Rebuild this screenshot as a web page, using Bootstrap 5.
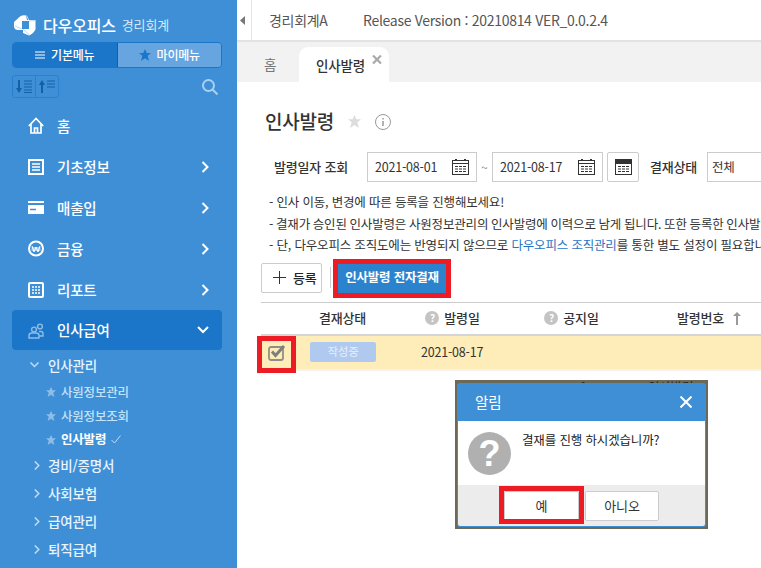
<!DOCTYPE html>
<html lang="ko"><head><meta charset="utf-8"><title>인사발령</title>
<link href="https://cdn.jsdelivr.net/npm/bootstrap@5.3.0/dist/css/bootstrap.min.css" rel="stylesheet">
<style>
html,body{height:568px;overflow:hidden;background:#fff}
body{font-family:"Noto Sans CJK KR","Noto Sans",sans-serif;font-size:13px;color:#333;letter-spacing:-.2px}
.shell{width:761px;height:568px;overflow:hidden;position:relative}
.side{width:237px;height:568px;flex:none;background:#3f8fd7;color:#fff;padding:0 15px 0 12px}
.brand{height:42px;padding:7px 0 0 2px;gap:7px}
.brand b{font-size:16px;font-weight:500;letter-spacing:-.15px}
.brand span{font-size:13px;color:#d5e8f8;margin-left:-1px}
.mswitch{height:26px;border:1px solid #1b76c9;border-radius:4px;overflow:hidden}
.mswitch div{flex:1;font-size:12px;font-weight:500;gap:6px}
.mswitch .on{background:#1b76c9;border-right:1px solid #135fa8}
.mswitch .off{background:#66a5e0}
.sortrow{height:23px;margin-top:7px;padding-right:4px}
.sortb{width:47px;height:23px;border:1px solid #2a80cf;border-radius:3px}
.sortb span{flex:1;height:100%;border-right:1px solid #2a80cf}
.sortb span:last-child{border:0}
.mitem{height:41px;padding-left:16px;padding-right:13px;font-size:14.5px;font-weight:500;border-radius:4px}
.mitem.home{margin-top:7px}
.mitem svg.ic{width:16px;height:17px;margin-right:13px;flex:none}
.mitem.act{background:#1b76c9;height:40px}
.sub1{height:28px;padding-left:19px;font-size:13.5px;font-weight:500;gap:7px;color:#e9f4fd}
.sub1>svg.chv{margin:0 1px 0 3px}
.sub1.first{height:30px;padding-left:18px;gap:9px}
.sub2{height:24px;padding-left:34px;font-size:12.5px;font-weight:500;color:#c3e2f8;gap:5px}
.sub2.sel{color:#fff;font-weight:700;height:23px}
.mn{flex:1;min-width:0;overflow:hidden;position:relative}
.topb{height:42px;border-bottom:2px solid #e3e3e3;font-size:14px;color:#555;letter-spacing:-.3px}
.tog{width:15px;height:40px;border-right:1px solid #e3e3e3;padding-left:3px;flex:none}
.ver1{margin-left:17px;width:94px}
.tabs{height:40px;background:#f2f2f2;padding-top:5px;padding-left:27px;font-size:13.5px}
.tb1{width:35px;color:#777;padding-top:7px}
.tb2{width:90px;height:35px;background:#fff;border-radius:9px 9px 0 0;padding:8px 0 0 17px;position:relative;color:#333;font-weight:500}
.tbx{position:absolute;left:73px;top:8px;display:block}
.pg{padding:0 0 0 28px;width:600px}
.ttl{height:33px;margin-top:23px}
.ttl b{font-size:19px;font-weight:500;color:#333;width:72px;white-space:nowrap;margin-right:11px}
.tstar{margin-right:14px}
.filt{height:30px;margin-top:14px;margin-left:9px;white-space:nowrap}
.flab{font-weight:500;font-size:13px;width:93px;color:#333;flex:none}
.dbox{width:110px;height:30px;border:1px solid #ccc;flex:none;padding:0 7px;font-size:12.5px;justify-content:space-between;color:#333}
.dbox.w2{width:111px}
.dbox.w3{padding-left:4px}
.tilde{width:15px;font-size:11px;text-align:center;color:#6c757d;flex:none}
.cbtn{width:32px;height:30px;border:1px solid #ccc;border-radius:2px;flex:none;margin-left:4px}
.flab2{width:57px;margin:0 0 0 11px}
.notes{margin:9px 0 0 4px;font-size:12.5px;line-height:21.5px;white-space:nowrap;width:600px;color:#333;letter-spacing:-.18px}
.notes a{color:#1f74c4;text-decoration:none}
.nl2{word-spacing:-.5px}
.tbar{margin-top:7px;height:30px;margin-left:-4px}
.bnew{width:61px;height:30px;border:1px solid #ccc;border-radius:2px;gap:7px;font-size:13px;font-weight:500;background:#fff;padding:0 0 0 11px;letter-spacing:-.2px}
.vsep{width:1px;height:21px;background:#ccc;margin:0 7px 0 8px}
.bsend{width:108px;height:30px;background:#2c83cd;color:#fff;font-weight:700;font-size:12.5px;border:0;border-radius:0;padding:0;white-space:nowrap;letter-spacing:-.2px}
.grid{margin:9px 0 0 -4px;width:600px}
.ghead{height:34px;border-top:1px solid #ccc;border-bottom:2px solid #d5d5d5;font-weight:500;font-size:13px;color:#333}
.grow{height:35px;background:#feedb9;border-bottom:2px solid #f4f2ec;font-size:12.5px}
.c1{width:40px;flex:none}.c2{width:79px;flex:none}.c3{width:119px;flex:none;gap:5px}.c4{width:119px;flex:none;gap:5px}.c5{width:119px;flex:none;gap:9px}
.c2h{padding-left:18px;white-space:nowrap}
.c3h{padding-left:26px}
.c5h{padding-left:59px}
.cchk{width:31px;padding-left:7px}
.cpil{width:98px;padding-left:18px}
.cdate{padding-left:31px;white-space:nowrap}
.qm{width:14px;height:14px;border-radius:50%;background:#c4c4c4;color:#fff;font-size:10px;font-weight:700;line-height:14px;text-align:center}
.pill{width:66px;height:20px;background:#afc9ef;color:#dfe9f7;font-size:11.5px;font-weight:500;border-radius:2px}
.hl{position:absolute;border:5px solid #ed1c24;z-index:5;pointer-events:none}
.h1{left:96px;top:259px;width:118px;height:39px}
.h2{left:20px;top:336px;width:39px;height:37px}
.dlg{position:absolute;left:218px;top:380px;width:253px;height:149px;padding:3px 2px 2px;background:#6c6958;z-index:6}
.peek{position:absolute;left:0;top:0;width:100%;height:3px;overflow:hidden;font-size:12.5px;line-height:16px;color:#222}
.peek span{position:absolute;top:-1px;white-space:nowrap}
.pk1{left:125px}.pk2{left:193px}
.dinner{height:100%;border:1px solid #3f8fd7;border-top:0;border-radius:3px;overflow:hidden;background:#3f8fd7}
.dhd{height:38px;background:#3f8fd7;color:#fff;font-size:14.5px;padding:0 13px 0 17px;justify-content:space-between}
.dbd{height:64px;background:#fff;padding:0 0 0 10px;gap:11px;font-size:12.5px;color:#222}
.dic{width:43px;height:43px;margin-top:11px;border-radius:50%;background:#b0b0b0;color:#fff;font-weight:700;font-size:36px;line-height:43px;text-align:center;font-family:"Liberation Sans",sans-serif;flex:none}
.dtx{padding-top:10px;letter-spacing:-.15px}
.dft{height:42px;background:#ececec;gap:6px}
.dft button{height:30px;background:#fff;border:1px solid #ccc;border-radius:2px;font-size:13px;padding:0;color:#333;letter-spacing:-.2px}
.dyes{width:75px;position:relative}
.dno{width:74px}
.h3{left:-6px;top:-6px;width:85px;height:38px}
</style></head><body>
<div class="shell d-flex">
<aside class="side">
 <div class="brand d-flex align-items-center">
  <svg width="22" height="22" viewBox="0 0 22 22"><path fill="#fff" d="M6 2.500Q9 .5 12 1.500l1 4.500h8.500v9.500Q19 20 15 21.500L9 19v-3H3q-2.500-.5-3-3V8z"/><path fill="#3f8fd7" d="M8 7h7v8H8z"/><path stroke="#bcdcf5" fill="none" stroke-width="1" d="M12.500 1.500L15 6.500M21 6.500L15 7M1 12l7 3M9 15l6.500 6"/></svg>
  <b>다우오피스</b><span>경리회계</span>
 </div>
 <div class="mswitch d-flex">
  <div class="on d-flex align-items-center justify-content-center"><svg width="10" height="8" viewBox="0 0 10 8"><path stroke="#fff" d="M0 1h10M0 4h10M0 7h10"/></svg>기본메뉴</div>
  <div class="off d-flex align-items-center justify-content-center"><svg width="12" height="12" viewBox="0 0 12 12"><path fill="#1b76c9" d="M6 0l1.800 4H12L8.700 6.800 10 12 6 9.200 2 12l1.300-5.200L0 4h4.200z"/></svg>마이메뉴</div>
 </div>
 <div class="sortrow d-flex align-items-center justify-content-between">
  <div class="sortb d-flex">
   <span class="d-flex align-items-center justify-content-center"><svg width="16" height="13" viewBox="0 0 16 13"><path fill="#135fa8" d="M2 0h2v8h2l-3 5-3-5h2z"/><path stroke="#135fa8" d="M8 1h8M8 4h8M8 7h8M8 10h8M8 12.500h8"/></svg></span>
   <span class="d-flex align-items-center justify-content-center"><svg width="16" height="13" viewBox="0 0 16 13"><path fill="#135fa8" d="M2 13h2V5h2L3 0 0 5h2z"/><path stroke="#135fa8" d="M8 1h8M8 4h8M8 7h8"/></svg></span>
  </div>
  <svg width="16" height="16" viewBox="0 0 16 16" fill="none" stroke="#a9d0f0" stroke-width="2"><circle cx="6.500" cy="6.500" r="5.500"/><path d="M10.500 10.500l5 5"/></svg>
 </div>
 <div class="mitem home d-flex align-items-center"><svg class="ic" viewBox="0 0 16 17" fill="none" stroke="#fff" stroke-width="1.700"><path d="M.8 9L8 1.500 15.200 9M3 7v9h10V7M6.500 16v-5h3v5"/></svg>홈</div>
 <div class="mitem d-flex align-items-center"><svg class="ic" viewBox="0 0 16 17" fill="none" stroke="#fff" stroke-width="2"><rect x="1" y="2" width="14" height="14"/><path stroke-width="1.500" d="M4 6h8M4 9h8M4 12h8"/></svg>기초정보<svg class="ms-auto" width="8" height="12" viewBox="0 0 8 12" fill="none" stroke="#fff" stroke-width="2"><path d="M1.500 1l5 5-5 5"/></svg></div>
 <div class="mitem d-flex align-items-center"><svg class="ic" viewBox="0 0 16 17"><path fill="#fff" d="M0 2h16v2H0zM0 6h16v9H0z"/><path stroke="#3f8fd7" stroke-width="1.500" d="M2 10.500h6"/></svg>매출입<svg class="ms-auto" width="8" height="12" viewBox="0 0 8 12" fill="none" stroke="#fff" stroke-width="2"><path d="M1.500 1l5 5-5 5"/></svg></div>
 <div class="mitem d-flex align-items-center"><svg class="ic" viewBox="0 0 16 17" fill="none" stroke="#fff"><circle cx="8" cy="8.500" r="7" stroke-width="2"/><path d="M4 6l2 6 2-5 2 5 2-6M3.500 8h9M3.500 10h9"/></svg>금융<svg class="ms-auto" width="8" height="12" viewBox="0 0 8 12" fill="none" stroke="#fff" stroke-width="2"><path d="M1.500 1l5 5-5 5"/></svg></div>
 <div class="mitem d-flex align-items-center"><svg class="ic" viewBox="0 0 16 17" fill="none" stroke="#fff" stroke-width="2"><rect x="1" y="2" width="14" height="14" rx="1"/><path stroke-width="1.500" stroke-dasharray="2 1" d="M4 6h8M4 9h8M4 12h8"/></svg>리포트<svg class="ms-auto" width="8" height="12" viewBox="0 0 8 12" fill="none" stroke="#fff" stroke-width="2"><path d="M1.500 1l5 5-5 5"/></svg></div>
 <div class="mitem act d-flex align-items-center"><svg class="ic" viewBox="0 0 16 17" fill="none" stroke="#8fbde8" stroke-width="1.400"><circle cx="6" cy="7.500" r="2.400"/><circle cx="12" cy="4.500" r="2.400"/><path d="M1 16v-2.500q0-2.500 3-2.500h4q3 0 3 2.500V16zM11 9.500h2q2 0 2 2V14h-4"/></svg>인사급여<svg class="ms-auto" width="12" height="8" viewBox="0 0 12 8" fill="none" stroke="#fff" stroke-width="2"><path d="M1 1l5 5 5-5"/></svg></div>
 <div class="sub1 first d-flex align-items-center"><svg width="9" height="6" viewBox="0 0 9 6" fill="none" stroke="#bddcf6" stroke-width="1.500"><path d="M.5.500l4 4 4-4"/></svg>인사관리</div>
 <div class="sub2 d-flex align-items-center"><svg width="10" height="10" viewBox="0 0 12 12"><path fill="#8fbde8" d="M6 0l1.800 4H12L8.700 6.800 10 12 6 9.200 2 12l1.300-5.200L0 4h4.200z"/></svg>사원정보관리</div>
 <div class="sub2 d-flex align-items-center"><svg width="10" height="10" viewBox="0 0 12 12"><path fill="#8fbde8" d="M6 0l1.800 4H12L8.700 6.800 10 12 6 9.200 2 12l1.300-5.200L0 4h4.200z"/></svg>사원정보조회</div>
 <div class="sub2 sel d-flex align-items-center"><svg width="10" height="10" viewBox="0 0 12 12"><path fill="#8fbde8" d="M6 0l1.800 4H12L8.700 6.800 10 12 6 9.200 2 12l1.300-5.200L0 4h4.200z"/></svg><span>인사발령</span><svg width="10" height="9" viewBox="0 0 10 9" fill="none" stroke="#bcdcf5"><path d="M.5 5l3 3 6-7.500"/></svg></div>
 <div class="sub1 d-flex align-items-center"><svg class="chv" width="6" height="9" viewBox="0 0 6 9" fill="none" stroke="#bddcf6" stroke-width="1.500"><path d="M.8.500l4 4-4 4"/></svg>경비/증명서</div>
 <div class="sub1 d-flex align-items-center"><svg class="chv" width="6" height="9" viewBox="0 0 6 9" fill="none" stroke="#bddcf6" stroke-width="1.500"><path d="M.8.500l4 4-4 4"/></svg>사회보험</div>
 <div class="sub1 d-flex align-items-center"><svg class="chv" width="6" height="9" viewBox="0 0 6 9" fill="none" stroke="#bddcf6" stroke-width="1.500"><path d="M.8.500l4 4-4 4"/></svg>급여관리</div>
 <div class="sub1 d-flex align-items-center"><svg class="chv" width="6" height="9" viewBox="0 0 6 9" fill="none" stroke="#bddcf6" stroke-width="1.500"><path d="M.8.500l4 4-4 4"/></svg>퇴직급여</div>
</aside>
<main class="mn">
 <div class="topb d-flex align-items-center">
  <div class="tog d-flex align-items-center"><svg width="5" height="9" viewBox="0 0 5 9"><path fill="#777" d="M5 0v9L0 4.500z"/></svg></div>
  <span class="ver1">경리회계A</span><span>Release Version : 20210814 VER_0.0.2.4</span>
 </div>
 <div class="tabs d-flex"><div class="tb1">홈</div><div class="tb2">인사발령<svg class="tbx" width="10" height="9" viewBox="0 0 10 9"><path stroke="#aaa" stroke-width="2.200" d="M1 .5l8 8M9 .5l-8 8"/></svg></div></div>
 <div class="pg">
  <div class="ttl d-flex align-items-center"><b>인사발령</b>
   <svg class="tstar" width="13" height="13" viewBox="0 0 12 12"><path fill="#ddd" d="M6 0l1.800 4H12L8.700 6.800 10 12 6 9.200 2 12l1.300-5.200L0 4h4.200z"/></svg>
   <svg width="16" height="16" viewBox="0 0 16 16" fill="none" stroke="#999"><circle cx="8" cy="8" r="7.500"/><path stroke-width="1.500" d="M8 7v5M8 4v1.500"/></svg>
  </div>
  <div class="filt d-flex align-items-center">
   <span class="flab">발령일자 조회</span>
   <div class="dbox d-flex align-items-center"><span>2021-08-01</span><svg width="17" height="16" viewBox="0 0 17 16" fill="none" stroke="#333"><rect x=".5" y="1.500" width="16" height="14"/><path d="M0 4.500h17"/><path stroke-width="2" d="M4 1V0M13 1V0"/><path stroke-dasharray="3 1" d="M3 7.500h11M3 10h11M3 12.500h11"/></svg></div>
   <span class="tilde">~</span>
   <div class="dbox w2 d-flex align-items-center"><span>2021-08-17</span><svg width="17" height="16" viewBox="0 0 17 16" fill="none" stroke="#333"><rect x=".5" y="1.500" width="16" height="14"/><path d="M0 4.500h17"/><path stroke-width="2" d="M4 1V0M13 1V0"/><path stroke-dasharray="3 1" d="M3 7.500h11M3 10h11M3 12.500h11"/></svg></div>
   <div class="cbtn d-flex align-items-center justify-content-center"><svg width="17" height="16" viewBox="0 0 17 16" fill="none" stroke="#333"><rect x=".5" y="1.500" width="16" height="14"/><path fill="#333" d="M0 .5h17v4H0z"/><path stroke-dasharray="3 1" d="M3 7.500h11M3 10h11M3 12.500h11"/></svg></div>
   <span class="flab flab2">결재상태</span>
   <div class="dbox w3 d-flex align-items-center"><span>전체</span></div>
  </div>
  <div class="notes">
   <div>- 인사 이동, 변경에 따른 등록을 진행해보세요!</div>
   <div class="nl2">- 결재가 승인된 인사발령은 사원정보관리의 인사발령에 이력으로 남게 됩니다. 또한 등록한 인사발령은</div>
   <div>- 단, 다우오피스 조직도에는 반영되지 않으므로 <a href="#">다우오피스 조직관리</a>를 통한 별도 설정이 필요합니다.</div>
  </div>
  <div class="tbar d-flex align-items-center">
   <button class="btn bnew d-flex align-items-center"><svg width="13" height="13" viewBox="0 0 13 13"><path stroke="#333" d="M6.500 0v13M0 6.500h13"/></svg>등록</button>
   <span class="vsep"></span>
   <button class="btn bsend">인사발령 전자결재</button>
  </div>
  <div class="grid">
   <div class="ghead d-flex align-items-center">
    <div class="c1"></div><div class="c2 c2h">결재상태</div>
    <div class="c3 c3h d-flex align-items-center justify-content-center"><span class="qm">?</span>발령일</div>
    <div class="c4 c3h d-flex align-items-center justify-content-center"><span class="qm">?</span>공지일</div>
    <div class="c5 c5h d-flex align-items-center"><span class="text-nowrap">발령번호</span><svg class="flex-shrink-0" width="8" height="13" viewBox="0 0 8 13"><path fill="#999" d="M3 13V4H0l4-4 4 4H5v9z"/></svg></div>
   </div>
   <div class="grow d-flex align-items-center">
    <div class="cchk"><svg class="d-block" width="18" height="17" viewBox="0 0 18 17" fill="none"><rect x="1" y="3" width="14" height="13" rx="2" stroke="#8f8f88" stroke-width="1.800"/><path stroke="#7f7f7a" stroke-width="3" d="M4 7.500l3.500 4L16 2"/></svg></div>
    <div class="cpil d-flex"><span class="pill d-flex align-items-center justify-content-center">작성중</span></div>
    <div class="cdate">2021-08-17</div>
   </div>
  </div>
 </div>
 <div class="hl h1"></div><div class="hl h2"></div>
 <div class="dlg">
  <div class="peek"><span class="pk1">1</span><span class="pk2">인사발령</span></div>
  <div class="dinner">
  <div class="dhd d-flex align-items-center"><span>알림</span><svg width="12" height="12" viewBox="0 0 12 12"><path stroke="#fff" stroke-width="2" d="M.5.500l11 11M11.500.5l-11 11"/></svg></div>
  <div class="dbd d-flex"><div class="dic">?</div><div class="dtx">결재를 진행 하시겠습니까?</div></div>
  <div class="dft d-flex align-items-center justify-content-center">
   <button class="dyes">예<span class="hl h3"></span></button>
   <button class="dno">아니오</button>
  </div>
  </div>
 </div>
</main>
</div>
<script src="https://cdn.jsdelivr.net/npm/bootstrap@5.3.0/dist/js/bootstrap.bundle.min.js"></script>
</body></html>
